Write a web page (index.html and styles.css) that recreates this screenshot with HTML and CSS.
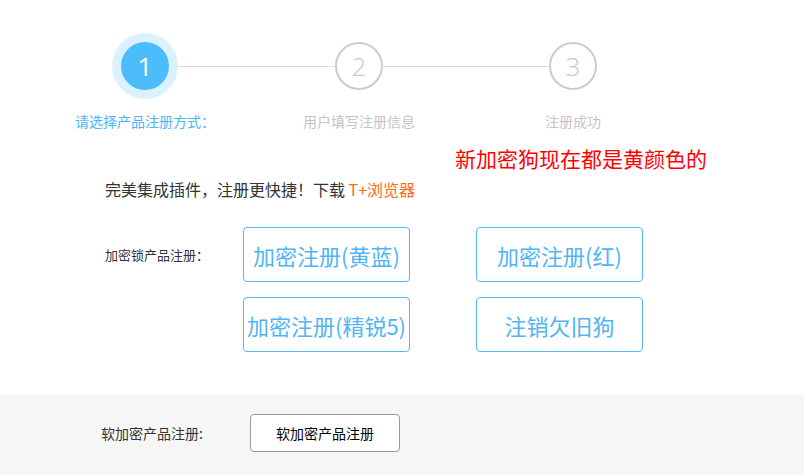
FILE: index.html
```html
<!DOCTYPE html>
<html lang="zh-CN">
<head>
    <meta charset="UTF-8">
    <title>产品注册</title>
    <link rel="stylesheet" href="styles.css">
</head>
<body>
    <div class="steps">
        <div class="step active">
            <div class="step-circle"><span>1</span></div>
            <div class="step-label">请选择产品注册方式：</div>
        </div>
        <div class="step">
            <div class="step-circle"><span>2</span></div>
            <div class="step-label">用户填写注册信息</div>
        </div>
        <div class="step last">
            <div class="step-circle"><span>3</span></div>
            <div class="step-label">注册成功</div>
        </div>
    </div>

    <div class="notice">新加密狗现在都是黄颜色的</div>

    <div class="intro">完美集成插件，注册更快捷！下载 <a href="#" class="link-orange">T+浏览器</a></div>

    <div class="hard-reg">
        <div class="hard-label">加密锁产品注册：</div>
        <div class="btn-grid">
            <button class="btn-blue">加密注册(黄蓝)</button>
            <button class="btn-blue">加密注册(红)</button>
            <button class="btn-blue">加密注册(精锐5)</button>
            <button class="btn-blue">注销欠旧狗</button>
        </div>
    </div>

    <div class="soft-reg">
        <div class="soft-label">软加密产品注册:</div>
        <button class="btn-plain">软加密产品注册</button>
    </div>
</body>
</html>
```

FILE: styles.css
```css
* {
    margin: 0;
    padding: 0;
    box-sizing: border-box;
}

body {
    background-color: #fff;
    font-family: "Noto Sans CJK SC", "Noto Sans", sans-serif;
    color: #333;
    width: 804px;
    height: 475px;
    overflow: hidden;
}

/* 步骤条 */
.steps {
    display: flex;
    padding: 33px 0 0 38px;
}

.step {
    width: 214px;
    display: flex;
    flex-direction: column;
    align-items: center;
    position: relative;
}

.step::after {
    content: "";
    position: absolute;
    top: 33px;
    left: 50%;
    width: 214px;
    height: 1px;
    background-color: #ddd;
    z-index: 0;
}

.step.last::after {
    display: none;
}

.step-circle {
    width: 66px;
    height: 66px;
    display: flex;
    align-items: center;
    justify-content: center;
    position: relative;
    z-index: 1;
}

.step-circle span {
    width: 48px;
    height: 48px;
    border-radius: 50%;
    border: 2px solid #ccc;
    background-color: #fff;
    color: #c8c8c8;
    font-family: "Open Sans", sans-serif;
    font-weight: 300;
    font-size: 26px;
    line-height: 44px;
    text-align: center;
}

.step.active .step-circle {
    border-radius: 50%;
    background-color: #dcf1fe;
}

.step.active .step-circle span {
    border: none;
    background-color: #4dbcfa;
    color: #fff;
    font-weight: 400;
    line-height: 48px;
}

.step-label {
    margin-top: 12px;
    font-size: 14px;
    line-height: 20px;
    color: #c4c4c4;
    white-space: nowrap;
}

.step.active .step-label {
    color: #4bb5f5;
}

.notice {
    margin-top: 13px;
    padding-left: 455px;
    font-size: 21px;
    line-height: 28px;
    color: #ff0000;
}

.intro {
    margin-top: 6px;
    padding-left: 105px;
    font-size: 16px;
    line-height: 22px;
    color: #333;
}

.link-orange {
    color: #ff6a12;
    text-decoration: none;
}

/* 加密锁注册 */
.hard-reg {
    display: flex;
    margin-top: 27px;
    padding-left: 105px;
}

.hard-label {
    width: 138px;
    font-size: 13px;
    line-height: 55px;
    color: #333;
}

.btn-grid {
    display: grid;
    grid-template-columns: 167px 167px;
    column-gap: 66px;
    row-gap: 15px;
}

.btn-blue {
    height: 55px;
    border: 1px solid #52b9f7;
    border-radius: 4px;
    background-color: #fff;
    color: #4fb5f4;
    font-family: "Noto Sans CJK SC", sans-serif;
    font-size: 22px;
    white-space: nowrap;
    cursor: pointer;
}

/* 软加密注册 */
.soft-reg {
    display: flex;
    align-items: center;
    margin-top: 43px;
    height: 80px;
    padding-left: 101px;
    padding-bottom: 4px;
    background-color: #f6f6f6;
}

.soft-label {
    width: 149px;
    font-size: 14px;
    color: #333;
}

.btn-plain {
    width: 150px;
    height: 38px;
    border: 1px solid #999;
    border-radius: 4px;
    background-color: #fff;
    color: #000;
    font-family: "Noto Sans CJK SC", sans-serif;
    font-size: 14px;
    cursor: pointer;
}
```
